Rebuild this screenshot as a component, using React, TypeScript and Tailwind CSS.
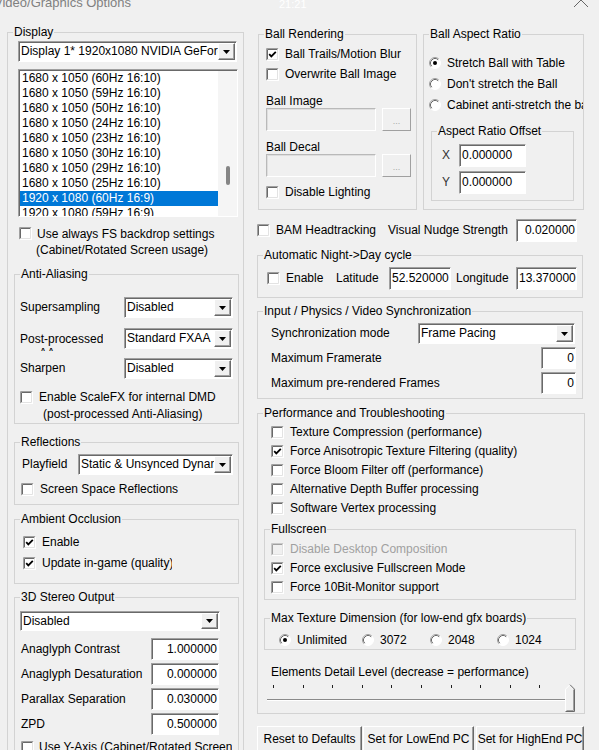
import React from 'react';

const sunken =
  'border border-t-[#a0a0a0] border-l-[#a0a0a0] border-b-white border-r-white shadow-[inset_1px_1px_0_#696969]';
const raised =
  'border border-t-white border-l-white border-b-[#696969] border-r-[#696969] shadow-[inset_-1px_-1px_0_#a0a0a0]';

const MODES = [
  '1680 x 1050 (60Hz 16:10)',
  '1680 x 1050 (59Hz 16:10)',
  '1680 x 1050 (50Hz 16:10)',
  '1680 x 1050 (24Hz 16:10)',
  '1680 x 1050 (23Hz 16:10)',
  '1680 x 1050 (30Hz 16:10)',
  '1680 x 1050 (29Hz 16:10)',
  '1680 x 1050 (25Hz 16:10)',
  '1920 x 1080 (60Hz 16:9)',
  '1920 x 1080 (59Hz 16:9)',
];

const TICKS = [8, 37.6, 67.2, 96.8, 126.4, 156, 185.6, 215.2, 244.8, 274.4, 304];

function Check({ checked = false, disabled = false }: { checked?: boolean; disabled?: boolean }) {
  return (
    <svg width="13" height="13" viewBox="0 0 13 13" className="block shrink-0">
      <rect x="0" y="0" width="13" height="13" fill={disabled ? '#f0f0f0' : '#fff'} />
      <path d="M0.5 12.5V0.5H12.5" stroke={disabled ? '#c8c8c8' : '#a0a0a0'} fill="none" />
      <path d="M1.5 11.5V1.5H11.5" stroke={disabled ? '#a0a0a0' : '#696969'} fill="none" />
      <path d="M1.5 11.5H11.5V1.5" stroke="#e3e3e3" fill="none" />
      <path d="M0.5 12.5H12.5V0.5" stroke="#fff" fill="none" />
      {checked && <path d="M3.2 6.2L5.3 8.4L9.8 3.8" stroke="#000" strokeWidth="1.8" fill="none" />}
    </svg>
  );
}

function Radio({ checked = false }: { checked?: boolean }) {
  return (
    <svg width="12" height="12" viewBox="0 0 12 12" className="block shrink-0">
      <circle cx="6" cy="6" r="5.5" fill="#fff" />
      <path d="M2.11 9.89A5.5 5.5 0 0 1 9.89 2.11" stroke="#a0a0a0" fill="none" />
      <path d="M2.82 9.18A4.5 4.5 0 0 1 9.18 2.82" stroke="#696969" fill="none" />
      <path d="M9.89 2.11A5.5 5.5 0 0 1 2.11 9.89" stroke="#fff" fill="none" />
      {checked && <circle cx="6" cy="6" r="2" fill="#000" />}
    </svg>
  );
}

function Select({ value, className = '' }: { value: string; className?: string }) {
  return (
    <div className={`flex shrink-0 bg-white pt-[1px] pr-[1px] pb-[1px] ${sunken} ${className}`}>
      <div className="flex min-w-0 flex-1 items-center overflow-hidden whitespace-nowrap pl-[2px]">{value}</div>
      <div className={`flex w-[17px] items-center justify-center bg-[#f0f0f0] ${raised}`}>
        <svg width="7" height="4" viewBox="0 0 7 4">
          <path d="M0 0H7L3.5 4Z" fill="#000" />
        </svg>
      </div>
    </div>
  );
}

function Field({ value, right = false, className = '' }: { value: string; right?: boolean; className?: string }) {
  return (
    <div
      className={`flex shrink-0 items-center overflow-hidden whitespace-nowrap bg-white ${sunken} ${
        right ? 'justify-end pr-[1px]' : 'pl-[2px]'
      } ${className}`}
    >
      {value}
    </div>
  );
}

function Group({ label, className = '', children }: { label: string; className?: string; children?: React.ReactNode }) {
  return (
    <div className={`relative flex shrink-0 flex-col border border-[#d3d3d3] ${className}`}>
      <span className="absolute -top-[8px] left-[5px] whitespace-nowrap bg-[#f0f0f0] px-[1px] leading-[15px]">{label}</span>
      {children}
    </div>
  );
}

function CheckRow({
  label,
  checked = false,
  disabled = false,
  className = '',
}: {
  label: string;
  checked?: boolean;
  disabled?: boolean;
  className?: string;
}) {
  return (
    <div className={`flex shrink-0 items-center whitespace-nowrap ${className}`}>
      <Check checked={checked} disabled={disabled} />
      <span className={`ml-[6px] ${disabled ? 'text-[#a0a0a0]' : ''}`}>{label}</span>
    </div>
  );
}

function DisabledPicker() {
  return (
    <div className="flex gap-[6px] pl-[7px]">
      <div className="h-[23px] w-[110px] border border-b-white border-l-[#b9b9b9] border-r-white border-t-[#b9b9b9] bg-[#f0f0f0] shadow-[inset_1px_1px_0_#dedede]" />
      <div className="flex h-[23px] w-[29px] items-end justify-center border border-b-[#a0a0a0] border-l-white border-r-[#a0a0a0] border-t-white pb-[4px] text-[9px] leading-[9px] text-[#a8a8a8]">
        ...
      </div>
    </div>
  );
}

function LeftColumn() {
  return (
    <Group label="Display" className="ml-[7px] h-[760px] w-[237px]">
      <Select value="Display 1* 1920x1080 NVIDIA GeForce RTX 3070" className="ml-[10px] mt-[8px] h-[21px] w-[219px]" />

      {/* video modes */}
      <div className={`ml-[10px] mt-[7px] flex h-[148px] w-[220px] shrink-0 bg-white pl-[1px] pt-[1px] ${sunken}`}>
        <div className="min-w-0 flex-1 overflow-hidden">
          {MODES.map((m, i) => (
            <div key={m} className={`h-[15px] whitespace-nowrap pl-[2px] ${i === 8 ? 'bg-[#0078d7] text-white' : ''}`}>
              {m}
            </div>
          ))}
        </div>
        <div className="w-[19px] bg-[#f5f5f5]">
          <div className="ml-[8px] mt-[95px] h-[19px] w-[4px] rounded-full bg-[#858585]" />
        </div>
      </div>

      <div className="ml-[11px] mt-[9px] flex items-start">
        <div className="mt-[1px]">
          <Check />
        </div>
        <div className="ml-[5px] whitespace-nowrap leading-[16px]">
          <div>Use always FS backdrop settings</div>
          <div className="-ml-[1px]">(Cabinet/Rotated Screen usage)</div>
        </div>
      </div>

      <Group label="Anti-Aliasing" className="ml-[6px] mt-[16px] h-[150px] w-[225px]">
        <div className="mt-[22px] flex h-[21px] items-center justify-between px-[5px]">
          <span>Supersampling</span>
          <Select value="Disabled" className="h-[21px] w-[109px]" />
        </div>
        <div className="mt-[10px] flex h-[21px] justify-between px-[5px]">
          <div className="mt-[4px] h-[19px] overflow-hidden leading-[14px]">
            <div>Post-processed</div>
            <div className="pl-[19px]">AA</div>
          </div>
          <Select value="Standard FXAA" className="h-[21px] w-[109px]" />
        </div>
        <div className="mt-[9px] flex h-[21px] items-center justify-between px-[5px]">
          <span>Sharpen</span>
          <Select value="Disabled" className="h-[21px] w-[109px]" />
        </div>
        <div className="mt-[10px] flex items-start pl-[5px]">
          <div className="mt-[2px]">
            <Check />
          </div>
          <div className="ml-[6px] whitespace-nowrap leading-[17px]">
            <div>Enable ScaleFX for internal DMD</div>
            <div className="pl-[4px]">(post-processed Anti-Aliasing)</div>
          </div>
        </div>
      </Group>

      <Group label="Reflections" className="ml-[6px] mt-[18px] h-[63px] w-[225px]">
        <div className="mt-[11px] flex h-[21px] items-center justify-between pl-[7px] pr-[5px]">
          <span>Playfield</span>
          <Select value="Static & Unsynced Dynamic" className="h-[21px] w-[155px]" />
        </div>
        <CheckRow label="Screen Space Reflections" className="mt-[8px] h-[13px] pl-[6px]" />
      </Group>

      <Group label="Ambient Occlusion" className="ml-[6px] mt-[14px] h-[65px] w-[225px]">
        <CheckRow label="Enable" checked className="mt-[16px] h-[13px] pl-[8px]" />
        <div className="mt-[8px] flex h-[13px] items-center pl-[8px]">
          <Check checked />
          <span className="ml-[6px] w-[130px] overflow-hidden whitespace-nowrap">Update in-game (quality)</span>
        </div>
      </Group>

      <Group label="3D Stereo Output" className="ml-[6px] mt-[13px] h-[200px] w-[225px]">
        <Select value="Disabled" className="ml-[5px] mt-[13px] h-[20px] w-[200px]" />
        {[
          ['Anaglyph Contrast', '1.000000'],
          ['Anaglyph Desaturation', '0.000000'],
          ['Parallax Separation', '0.030000'],
          ['ZPD', '0.500000'],
        ].map(([label, value], i) => (
          <div key={label} className={`${i === 0 ? 'mt-[7px]' : 'mt-[3px]'} flex h-[22px] w-[204px] shrink-0 items-center justify-between pl-[6px]`}>
            <span>{label}</span>
            <Field value={value} right className="h-[22px] w-[68px]" />
          </div>
        ))}
        <div className="mt-[6px] flex h-[13px] shrink-0 items-center pl-[6px]">
          <Check />
          <span className="ml-[5px] w-[193px] overflow-hidden whitespace-nowrap">Use Y-Axis (Cabinet/Rotated Screen)</span>
        </div>
      </Group>
    </Group>
  );
}

function RightColumn() {
  return (
    <div className="ml-[13px] mt-[2px] w-[328px] shrink-0">
      <div className="flex">
        <Group label="Ball Rendering" className="ml-[1px] h-[176px] w-[159px]">
          <CheckRow label="Ball Trails/Motion Blur" checked className="mt-[13px] h-[13px] pl-[7px]" />
          <CheckRow label="Overwrite Ball Image" className="mt-[7px] h-[13px] pl-[7px]" />
          <div className="mt-[13px] pl-[7px] leading-[14px]">Ball Image</div>
          <DisabledPicker />
          <div className="mt-[9px] pl-[7px] leading-[14px]">Ball Decal</div>
          <DisabledPicker />
          <CheckRow label="Disable Lighting" className="mt-[9px] h-[13px] pl-[7px]" />
        </Group>

        <Group label="Ball Aspect Ratio" className="ml-[6px] h-[176px] w-[161px]">
          {['Stretch Ball with Table', "Don't stretch the Ball", 'Cabinet anti-stretch the ball'].map((t, i) => (
            <div key={t} className={`${i === 0 ? 'mt-[22px]' : 'mt-[9px]'} flex h-[12px] shrink-0 items-center overflow-hidden whitespace-nowrap pl-[5px]`}>
              <Radio checked={i === 0} />
              <span className="ml-[6px]">{t}</span>
            </div>
          ))}
          <Group label="Aspect Ratio Offset" className="ml-[7px] mt-[20px] h-[70px] w-[143px]">
            <div className="mt-[12px] flex h-[23px] items-center">
              <span className="w-[27px] pl-[10px] text-[#333]">X</span>
              <Field value="0.000000" className="h-[23px] w-[67px]" />
            </div>
            <div className="mt-[4px] flex h-[23px] items-center">
              <span className="w-[27px] pl-[10px] text-[#333]">Y</span>
              <Field value="0.000000" className="h-[23px] w-[67px]" />
            </div>
          </Group>
        </Group>
      </div>

      <div className="mt-[9px] flex h-[23px] items-center whitespace-nowrap">
        <div className="flex w-[131px] items-center">
          <Check />
          <span className="ml-[6px]">BAM Headtracking</span>
        </div>
        <span className="w-[128px]">Visual Nudge Strength</span>
        <Field value="0.020000" right className="h-[23px] w-[61px]" />
      </div>

      <Group label="Automatic Night->Day cycle" className="mt-[13px] h-[43px] w-[326px]">
        <div className="mt-[11px] flex h-[23px] items-center whitespace-nowrap">
          <div className="ml-[9px]">
            <Check />
          </div>
          <span className="ml-[6px] w-[50px]">Enable</span>
          <span className="w-[53px]">Latitude</span>
          <Field value="52.520000" className="h-[23px] w-[62px]" />
          <span className="w-[65px] pl-[5px]">Longitude</span>
          <Field value="13.370000" className="h-[23px] w-[61px]" />
        </div>
      </Group>

      <Group label="Input / Physics / Video Synchronization" className="mt-[13px] h-[88px] w-[326px]">
        <div className="mt-[11px] flex h-[21px] items-center pl-[13px]">
          <span className="w-[147px]">Synchronization mode</span>
          <Select value="Frame Pacing" className="h-[21px] w-[157px]" />
        </div>
        <div className="mt-[3px] flex h-[22px] items-center justify-between pl-[13px] pr-[6px]">
          <span>Maximum Framerate</span>
          <Field value="0" right className="h-[22px] w-[35px]" />
        </div>
        <div className="mt-[3px] flex h-[22px] items-center justify-between pl-[13px] pr-[6px]">
          <span>Maximum pre-rendered Frames</span>
          <Field value="0" right className="h-[22px] w-[35px]" />
        </div>
      </Group>

      <Group label="Performance and Troubleshooting" className="mt-[14px] h-[301px] w-[328px]">
        <div className="mt-[9px]">
          <CheckRow label="Texture Compression (performance)" className="h-[19px] pl-[13px]" />
          <CheckRow label="Force Anisotropic Texture Filtering (quality)" checked className="h-[19px] pl-[13px]" />
          <CheckRow label="Force Bloom Filter off (performance)" className="h-[19px] pl-[13px]" />
          <CheckRow label="Alternative Depth Buffer processing" className="h-[19px] pl-[13px]" />
          <CheckRow label="Software Vertex processing" className="h-[19px] pl-[13px]" />
        </div>

        <Group label="Fullscreen" className="ml-[6px] mt-[11px] h-[71px] w-[312px]">
          <div className="mt-[10px]">
            <CheckRow label="Disable Desktop Composition" disabled className="h-[19px] pl-[6px]" />
            <CheckRow label="Force exclusive Fullscreen Mode" checked className="h-[19px] pl-[6px]" />
            <CheckRow label="Force 10Bit-Monitor support" className="h-[19px] pl-[6px]" />
          </div>
        </Group>

        <Group label="Max Texture Dimension (for low-end gfx boards)" className="ml-[6px] mt-[18px] h-[32px] w-[312px]">
          <div className="mt-[14px] flex h-[14px] items-center pl-[14px]">
            {[
              ['Unlimited', 'w-[83px]'],
              ['3072', 'w-[68px]'],
              ['2048', 'w-[67px]'],
              ['1024', 'w-[60px]'],
            ].map(([t, w], i) => (
              <div key={t} className={`flex items-center ${w}`}>
                <Radio checked={i === 0} />
                <span className="ml-[6px]">{t}</span>
              </div>
            ))}
          </div>
        </Group>

        <div className="mt-[15px] whitespace-nowrap pl-[13px]">Elements Detail Level (decrease = performance)</div>
        <svg width="312" height="31" viewBox="0 0 312 31" className="ml-[7px] mt-[2px] block shrink-0">
          {TICKS.map(x => (
            <rect key={x} x={Math.round(x)} y={3} width={1} height={3} fill="#202020" />
          ))}
          <line x1="2" x2="300" y1="17.5" y2="17.5" stroke="#8a8a8a" />
          <line x1="2" x2="300" y1="18.5" y2="18.5" stroke="#fff" />
          <polygon points="300,7 305,2 310,7 310,30 300,30" fill="#f0f0f0" />
          <polyline points="300.5,29.5 300.5,7.2 305,2.7" stroke="#fff" fill="none" />
          <polyline points="305,2.7 309.5,7.2 309.5,29.5 300.5,29.5" stroke="#696969" fill="none" />
          <polyline points="308.5,7.6 308.5,28.5 301.5,28.5" stroke="#a0a0a0" fill="none" />
        </svg>
      </Group>

      <div className="mt-[12px] flex whitespace-nowrap">
        <div className={`flex h-[26px] w-[105px] items-center justify-center bg-[#f0f0f0] ${raised}`}>Reset to Defaults</div>
        <div className={`ml-[1px] flex h-[26px] w-[111px] items-center justify-center bg-[#f0f0f0] ${raised}`}>Set for LowEnd PC</div>
        <div className={`ml-[2px] flex h-[26px] w-[108px] items-center justify-center bg-[#f0f0f0] ${raised}`}>Set for HighEnd PC</div>
      </div>
    </div>
  );
}

export default function App() {
  return (
    <div className="h-[750px] w-[599px] overflow-hidden bg-[#f0f0f0] font-['Liberation_Sans',Arial,sans-serif] text-[12px] leading-[15px] text-black">
      {/* window caption, mostly scrolled off the top */}
      <div className="relative flex h-[32px] items-start">
        <div className="-ml-[6px] -mt-[5px] whitespace-nowrap text-[13px] text-[#808080]">Video/Graphics Options</div>
        <span className="absolute -top-[3px] left-[279px] text-[11px] text-white">21:21</span>
        <svg className="absolute -top-[7px] left-[572px]" width="18" height="14" viewBox="0 0 18 14">
          <path d="M2 0L16 14M16 0L2 14" stroke="#666" fill="none" />
        </svg>
      </div>
      <div className="flex items-start">
        <LeftColumn />
        <RightColumn />
      </div>
    </div>
  );
}
